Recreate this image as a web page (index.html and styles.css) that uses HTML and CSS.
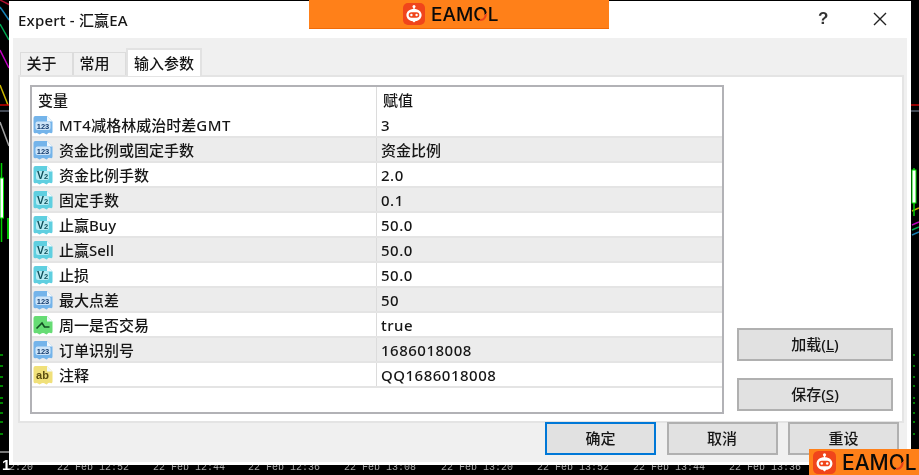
FILE: index.html
```html
<!DOCTYPE html>
<html lang="zh">
<head>
<meta charset="utf-8">
<title>Expert - 汇赢EA</title>
<link rel="stylesheet" href="styles.css">
</head>
<body>
<svg width="0" height="0" class="defs">
  <defs>
    <path id="sheet" d="M2.500 1H14L19.500 6.500V16.500Q19.500 18.800 17.500 18Q15.500 17 14.500 18.800Q13.800 20 12.500 19Q10 17.200 7.500 19Q6 20 5 18.600Q4 17.400 2.500 18.200Q.5 18.800 .5 16.500V3Q.5 1 2.500 1Z"/>
    <g id="robot">
      <rect width="22" height="22" rx="5" fill="#f0451b"/>
      <circle cx="11" cy="3.600" r="1.500" fill="#fff"/>
      <rect x="10.300" y="4" width="1.400" height="3" fill="#fff"/>
      <path d="M11 6C6.500 6 3.400 8.600 3.400 12S6.500 18 9.200 18L11 19.600L12.800 18C15.500 18 18.600 15.400 18.600 12S15.500 6 11 6Z" fill="#fff"/>
      <rect x="5.700" y="9.300" width="10.600" height="5.400" rx="2.700" fill="#f0451b"/>
      <circle cx="8.400" cy="12" r="1.200" fill="#fff"/>
      <circle cx="13.600" cy="12" r="1.200" fill="#fff"/>
    </g>
    <path id="fold" d="M14 1V6.500H19.500Z" fill="#f2f8fc"/>
    <g id="ico-num">
      <use href="#sheet" fill="#74b4ea"/>
      <use href="#fold"/>
      <rect x="2.500" y="6.500" width="15" height="8.500" rx="2" fill="#cfe5f8"/>
      <text x="10" y="13.500" class="ico-t ico-navy">123</text>
    </g>
    <g id="ico-dbl">
      <use href="#sheet" fill="#5fcfe0"/>
      <use href="#fold"/>
      <rect x="3" y="6" width="13" height="9" rx="2" fill="#b6ebf3"/>
      <text x="4" y="14" class="ico-v ico-teal">V<tspan class="ico-sub">2</tspan></text>
    </g>
    <g id="ico-bool">
      <use href="#sheet" fill="#66dc74"/>
      <use href="#fold"/>
      <path d="M3.500 13.500L9 8L11.500 12H16.500" fill="none" stroke="#124d22" stroke-width="1.600"/>
    </g>
    <g id="ico-str">
      <use href="#sheet" fill="#f0e07a"/>
      <use href="#fold"/>
      <text x="9.500" y="14" class="ico-t ico-olive">ab</text>
    </g>
  </defs>
</svg>

<svg class="chart" width="919" height="475" viewBox="0 0 919 475">
  <g fill="none" stroke-width="1.500">
    <path d="M0 0L10 5" stroke="#b01030"/>
    <path d="M0 7L9 20" stroke="#1680b4"/>
    <path d="M0 24L9 40" stroke="#00a850"/>
    <path d="M0 50L9 68" stroke="#c000c0"/>
    <path d="M0 85L8 105" stroke="#c8b400"/>
    <path d="M0 105H9M911 105H919" stroke="#c80000"/>
    <path d="M0 111H9M911 111H919" stroke="#5a6270"/>
    <path d="M0 122L9 146" stroke="#a0a0a0"/>
    <path d="M0 452H9" stroke="#a0a0a0"/>
    <path d="M912 211L919 208" stroke="#c8b400"/>
    <path d="M912 225L919 222" stroke="#c000c0"/>
    <path d="M912 230L919 227" stroke="#00a850"/>
    <path d="M912 235L919 232" stroke="#1680b4"/>
    <path d="M1.500 163V242M8 218V239" stroke="#00d000"/>
    <path d="M914 168V216" stroke="#00d000"/>
  </g>
  <rect x="0" y="178" width="3.500" height="40" fill="#fff" stroke="#00e000"/>
  <rect x="7" y="218" width="2" height="21" fill="#00c000"/>
  <rect x="912" y="170" width="4" height="33" fill="#fff" stroke="#00e000"/>
  <path d="M0 355h3M0 366h3M0 377h3M0 386h3M0 398h3M0 403h3M0 413h3M0 422h3M0 434h3M913 355h2M913 366h2M913 377h2M913 386h2M913 398h2M913 403h2M913 413h2M913 422h2M913 434h2" stroke="#00b000" stroke-width="1.500"/>
  <text x="2" y="470" class="axis-one">1</text>
  <text x="9" y="470" class="axis">2:20</text>
  <text x="57" y="470" class="axis">22 Feb 12:52</text>
  <text x="153" y="470" class="axis">22 Feb 12:44</text>
  <text x="248" y="470" class="axis">22 Feb 12:36</text>
  <text x="344" y="470" class="axis">22 Feb 13:08</text>
  <text x="441" y="470" class="axis">22 Feb 13:20</text>
  <text x="537" y="470" class="axis">22 Feb 13:52</text>
  <text x="633" y="470" class="axis">22 Feb 13:44</text>
  <text x="729" y="470" class="axis">22 Feb 13:36</text>
</svg>

<div class="dialog">
  <header class="titlebar">
    <span class="title">Expert - 汇赢EA</span>
    <span class="help">?</span>
    <svg class="close" width="14" height="14" viewBox="0 0 14 14"><path d="M1 1L13 13M13 1L1 13" stroke="#222" stroke-width="1.400"/></svg>
  </header>
  <div class="panel">
    <nav class="tabs">
      <span class="tab">关于</span>
      <span class="tab">常用</span>
      <span class="tab tab-active">输入参数</span>
    </nav>
    <section class="page">
      <div class="grid">
        <div class="row row-head"><span class="name">变量</span><span class="val">赋值</span></div>
        <div class="row"><span class="name"><svg class="ico" viewBox="0 0 20 20"><use href="#ico-num"/></svg><span class="lat">MT4</span>减格林威治时差<span class="lat">GMT</span></span><span class="val">3</span></div>
        <div class="row row-alt"><span class="name"><svg class="ico" viewBox="0 0 20 20"><use href="#ico-num"/></svg>资金比例或固定手数</span><span class="val val-cjk">资金比例</span></div>
        <div class="row"><span class="name"><svg class="ico" viewBox="0 0 20 20"><use href="#ico-dbl"/></svg>资金比例手数</span><span class="val">2.0</span></div>
        <div class="row row-alt"><span class="name"><svg class="ico" viewBox="0 0 20 20"><use href="#ico-dbl"/></svg>固定手数</span><span class="val">0.1</span></div>
        <div class="row"><span class="name"><svg class="ico" viewBox="0 0 20 20"><use href="#ico-dbl"/></svg>止赢Buy</span><span class="val">50.0</span></div>
        <div class="row row-alt"><span class="name"><svg class="ico" viewBox="0 0 20 20"><use href="#ico-dbl"/></svg>止赢Sell</span><span class="val">50.0</span></div>
        <div class="row"><span class="name"><svg class="ico" viewBox="0 0 20 20"><use href="#ico-dbl"/></svg>止损</span><span class="val">50.0</span></div>
        <div class="row row-alt"><span class="name"><svg class="ico" viewBox="0 0 20 20"><use href="#ico-num"/></svg>最大点差</span><span class="val">50</span></div>
        <div class="row"><span class="name"><svg class="ico" viewBox="0 0 20 20"><use href="#ico-bool"/></svg>周一是否交易</span><span class="val">true</span></div>
        <div class="row row-alt"><span class="name"><svg class="ico" viewBox="0 0 20 20"><use href="#ico-num"/></svg>订单识别号</span><span class="val">1686018008</span></div>
        <div class="row"><span class="name"><svg class="ico" viewBox="0 0 20 20"><use href="#ico-str"/></svg>注释</span><span class="val">QQ1686018008</span></div>
      </div>
      <div class="side">
        <button class="btn btn-side">加载(<u>L</u>)</button>
        <button class="btn btn-side">保存(<u>S</u>)</button>
      </div>
    </section>
    <footer class="footer">
      <button class="btn btn-main btn-focus">确定</button>
      <button class="btn btn-main">取消</button>
      <button class="btn btn-main">重设</button>
    </footer>
  </div>
</div>

<div class="brand brand-top">
  <svg class="robot" width="22" height="22" viewBox="0 0 22 22"><use href="#robot"/></svg>
  <span class="word">EAM<span class="word-o">O</span>L</span>
</div>
<div class="brand brand-corner">
  <svg class="robot" width="23" height="23" viewBox="0 0 22 22"><use href="#robot"/></svg>
  <span class="word">EAM<span class="word-o">O</span>L</span>
</div>
</body>
</html>
```
FILE: styles.css
```css
* { box-sizing: border-box; }
html, body { margin: 0; padding: 0; }
body {
  width: 919px;
  height: 475px;
  background: #000;
  position: relative;
  overflow: hidden;
  font-family: "Noto Sans", "Noto Sans CJK SC", sans-serif;
  font-size: 15px;
  font-weight: 500;
  color: #161616;
}
.defs { position: absolute; }
.chart { position: absolute; left: 0; top: 0; filter: blur(.5px); }
.axis { font: 400 10px "Liberation Mono", monospace; fill: #a8a8a8; }
.axis-one { font: bold 15px "Liberation Sans", sans-serif; fill: #fff; }

.dialog {
  position: absolute;
  left: 9px;
  top: 1px;
  width: 902px;
  height: 464px;
  background: #fff;
  display: flex;
  flex-direction: column;
  filter: blur(.45px);
}
.titlebar {
  height: 37px;
  flex: none;
  display: flex;
  align-items: center;
  padding-left: 9px;
  position: relative;
}
.title { font-size: 15px; line-height: 36px; letter-spacing: .2px; }
.help {
  position: absolute;
  left: 809px;
  top: 8px;
  font: bold 17px "Liberation Sans", sans-serif;
  color: #333;
}
.close { position: absolute; left: 864px; top: 11px; }

.panel {
  flex: 1;
  margin: 0 4px 3px;
  background: #f0f0f0;
  display: flex;
  flex-direction: column;
  min-height: 0;
}
.tabs {
  display: flex;
  align-items: flex-end;
  height: 28px;
  margin: 10px 0 -1px 7px;
  position: relative;
  z-index: 1;
}
.tab {
  width: 53px;
  height: 23px;
  margin-bottom: 1px;
  padding-right: 10px;
  text-align: center;
  line-height: 21px;
  background: #f0f0f0;
  border: 1px solid #dcdcdc;
  border-bottom: 0;
}
.tab-active {
  width: 76px;
  height: 28px;
  margin-bottom: 0;
  padding-right: 0;
  line-height: 26px;
  background: #fff;
  border: 2px solid #e2e2e2;
  border-bottom: 0;
}
.page {
  margin: 0 3px 0 5px;
  height: 348px;
  flex: none;
  background: #fff;
  border: 2px solid #e4e4e4;
  padding: 8px 9px 7px 10px;
  display: flex;
  gap: 13px;
}
.grid {
  width: 694px;
  border: 2px solid #b2b2b6;
  background: #fff;
  flex: none;
}
.row {
  display: flex;
  height: 25px;
  border-bottom: 2px solid #e4e4e4;
  line-height: 24px;
}
.row-head { height: 26px; border-bottom: 0; line-height: 26px; }
.row-alt { background: #ececec; }
.name {
  width: 345px;
  flex: none;
  display: flex;
  align-items: center;
  padding-left: 1px;
  border-right: 1px solid #dcdcdc;
  white-space: nowrap;
}
.row-head .name { padding-left: 6px; }
.lat { letter-spacing: .5px; }
.val { padding-left: 4px; white-space: nowrap; letter-spacing: .5px; }
.val-cjk { letter-spacing: 0; }
.row-head .val { padding-left: 6px; letter-spacing: 0; }
.ico { width: 20px; height: 20px; margin-right: 6px; flex: none; }
.ico-t { font: 700 7.500px "Liberation Sans", sans-serif; text-anchor: middle; }
.ico-v { font: 700 10.500px "Liberation Sans", sans-serif; }
.ico-sub { font-size: 7.500px; }
.ico-navy { fill: #143c6e; }
.ico-teal { fill: #0e4f5a; }
.ico-olive { fill: #5a4c10; font-size: 11px; }

.side {
  width: 156px;
  flex: none;
  display: flex;
  flex-direction: column;
  justify-content: flex-end;
  gap: 17px;
  padding-bottom: 3px;
}
.btn {
  font: inherit;
  color: inherit;
  background: #e1e1e1;
  border: 2px solid #b0b0b0;
  padding: 0 0 2px;
  height: 33px;
}
.btn-side { width: 156px; }
.footer {
  display: flex;
  justify-content: flex-end;
  gap: 10.500px;
  padding-right: 8px;
  margin-top: -1px;
  position: relative;
}
.btn-main { width: 111px; }
.btn-focus { border-color: #0078d7; }

.brand {
  position: absolute;
  background: #ff8019;
  display: flex;
  align-items: center;
  filter: blur(.35px);
}
.brand-top {
  left: 309px;
  top: 0;
  width: 300px;
  height: 29px;
  padding-left: 94px;
  gap: 6px;
  border-bottom: 1px solid #f06a08;
}
.brand-corner {
  left: 809px;
  top: 449px;
  width: 110px;
  height: 26px;
  padding-left: 4px;
  gap: 6px;
}
.robot { flex: none; }
.word {
  font-family: "Inter", sans-serif;
  font-weight: 500;
  color: #0a0a0a;
  line-height: 1;
  white-space: nowrap;
}
.brand-top .word { font-size: 19px; }
.brand-corner .word { font-size: 21px; }
.word-o {
  background: linear-gradient(135deg, #0a0a0a 62%, #e8431a 62%);
  -webkit-background-clip: text;
  background-clip: text;
  color: transparent;
}
```
